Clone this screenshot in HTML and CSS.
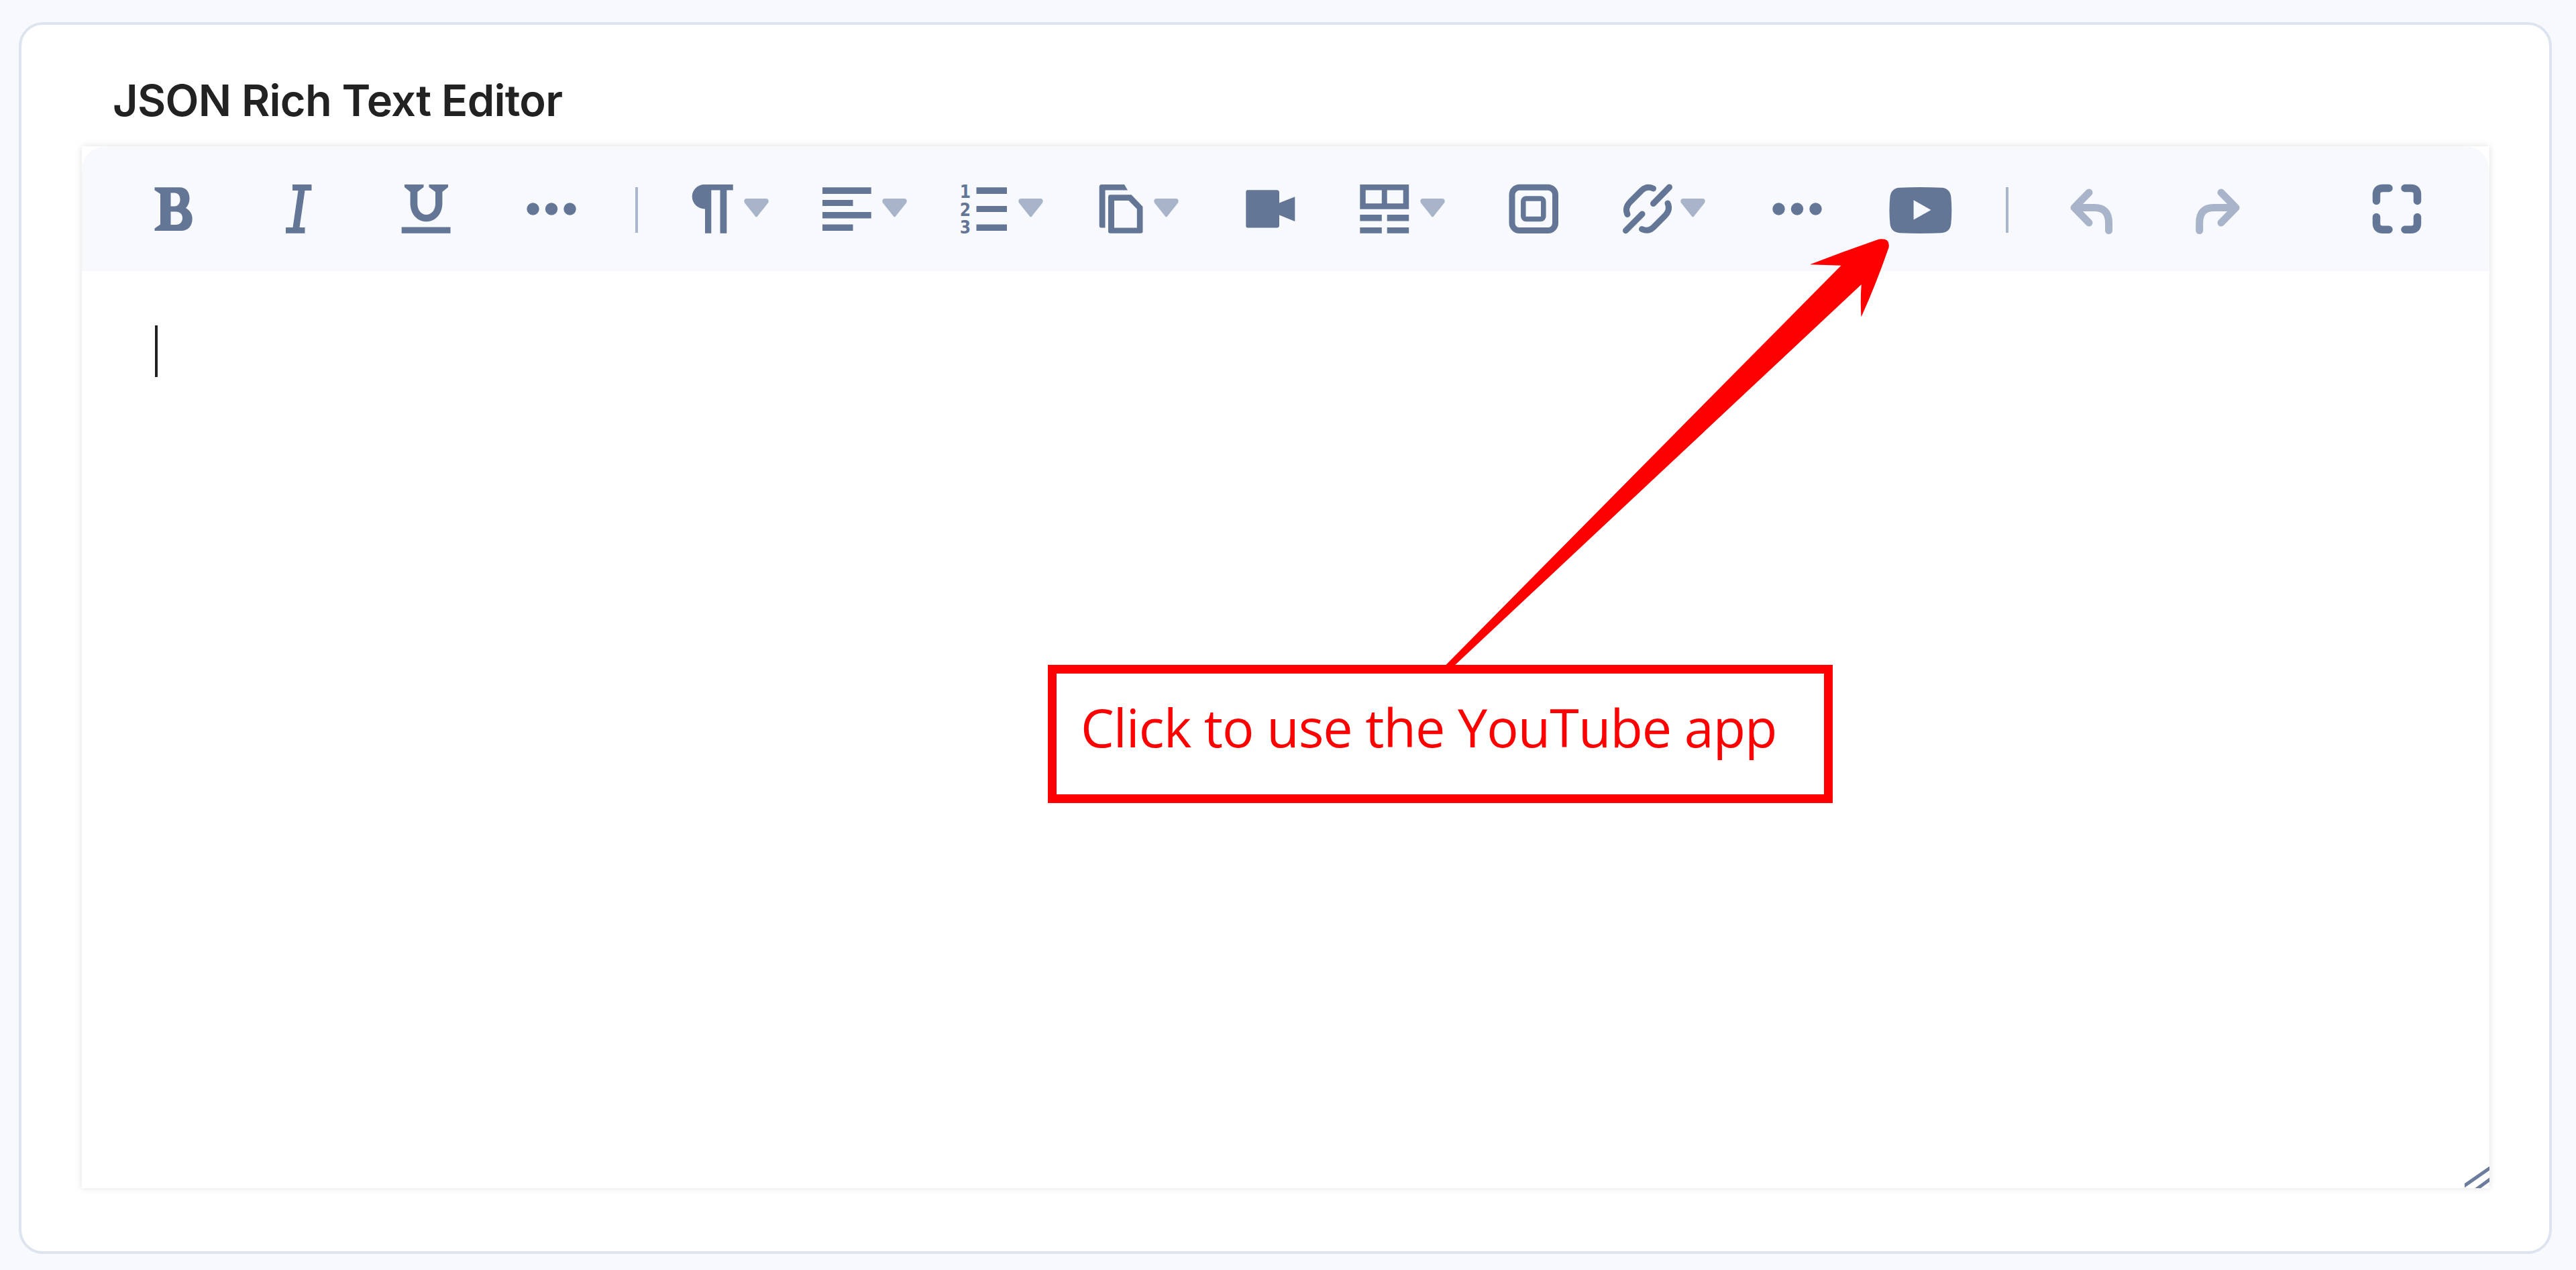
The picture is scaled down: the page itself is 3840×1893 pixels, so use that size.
FILE: index.html
```html
<!DOCTYPE html>
<html lang="en">
<head>
<meta charset="utf-8">
<title>JSON Rich Text Editor</title>
<link rel="stylesheet" href="styles.css">
</head>
<body>
<svg class="defs" aria-hidden="true">
  <symbol id="caret" viewBox="0 0 37 28"><path d="M4 0H33C36.500 0 38 4 35.500 7L20 26.500Q18.500 28.500 17 26.500L1.500 7C-1 4 .5 0 4 0Z"/></symbol>
  <symbol id="dots" viewBox="0 0 76 76"><circle cx="10.500" cy="38.500" r="9.200"/><circle cx="38" cy="38.500" r="9.200"/><circle cx="65.500" cy="38.500" r="9.200"/></symbol>
</svg>
<main class="card">
  <h1 class="title"><span>JSON Rich Text Editor</span></h1>
  <section class="editor">
    <div class="toolbar">
      <button class="tool bold" aria-label="Bold"><svg class="icon" width="58" viewBox="230 273 58 76"><path fill-rule="evenodd" d="M230.500 279.300H268C277 279.300 282.500 286 282.500 295.500C282.500 302 280 307 277 310C283 313.500 286.700 319 286.700 326C286.700 337 280 344 270 344H230.500V340.500L239 334.500V289L230.500 283.500ZM254.500 287.500V307.500H260C265.500 307.500 268.500 303 268.500 297.500C268.500 291 265 287.500 260 287.500ZM254.500 315.500V335H262C268 335 272 331 272 325C272 319 268 315.500 262 315.500Z"/></svg></button>
      <button class="tool italic" aria-label="Italic"><svg class="icon" width="40" viewBox="425 273 40 76"><path d="M436 275H464.500V284H454.500L446.500 339H454.500V347.700H426V339H436.500L444.500 284H436Z"/></svg></button>
      <button class="tool underline" aria-label="Underline"><svg class="icon" width="74" viewBox="598 273 74 76"><path d="M603 275H631.500V279L622.300 286V304C622.300 313 628 320 635.500 320S649 313 649 304V286L639.500 279V275H668V279L659.400 286V303C659.400 319 649 330.300 635.500 330.300S611.600 319 611.600 303V286L603 279ZM598.700 338.500H671.500V347.700H598.700Z"/></svg></button>
      <button class="tool more" aria-label="More"><svg class="icon" width="76"><use href="#dots"/></svg></button>
      <span class="divider divider-first"></span>
      <button class="tool paragraph" aria-label="Paragraph"><svg class="icon" width="62" viewBox="1031 273 62 76"><path d="M1050 275H1092.700V283.500H1083.300V347.700H1073.500V283.500H1060.300V347.700H1051V311.500C1040 311.500 1031.700 303 1031.700 293S1040 275 1050 275Z"/></svg><svg class="caret"><use href="#caret"/></svg></button>
      <button class="tool align" aria-label="Align"><svg class="icon" width="73" viewBox="1226 273 73 76"><path d="M1226 279.300H1298.700V289H1226ZM1226 298H1271.500V307H1226ZM1226 316H1298.700V325.500H1226ZM1226 334.500H1271.500V344H1226Z"/></svg><svg class="caret"><use href="#caret"/></svg></button>
      <button class="tool list" aria-label="Ordered list"><svg class="icon" width="71" viewBox="1431 273 71 76"><g class="digits"><text x="1430.800" y="294.500">1</text><text x="1430.800" y="321.500">2</text><text x="1430.800" y="347.700">3</text></g><path d="M1455.500 279.300H1501V289H1455.500ZM1455.500 307H1501V316H1455.500ZM1455.500 334.500H1501V344H1455.500Z"/></svg><svg class="caret"><use href="#caret"/></svg></button>
      <button class="tool copy" aria-label="Document"><svg class="icon" width="66" viewBox="1638 273 66 76"><path d="M1642 275H1676L1681 283.500H1647.500V339.500H1641.500Q1638.700 339.500 1638.700 336V278.500Q1638.700 275 1642 275Z"/><path fill-rule="evenodd" d="M1655 290.300H1686.500L1703.500 308V345Q1703.500 347.700 1700.500 347.700H1655Q1652 347.700 1652 345V293.500Q1652 290.300 1655 290.300ZM1661 299V339.500H1694.800V311.500L1682.500 299Z"/></svg><svg class="caret"><use href="#caret"/></svg></button>
      <button class="tool video" aria-label="Video"><svg class="icon" width="74" viewBox="1857 273 74 76"><path d="M1860 283.300H1903Q1907 283.300 1907 287V302.500L1930.300 293.300V330L1907 320.500V336Q1907 339.500 1903 339.500H1860Q1857.300 339.500 1857.300 336.500V286.500Q1857.300 283.300 1860 283.300Z"/></svg></button>
      <button class="tool table" aria-label="Table"><svg class="icon" width="74" viewBox="2027 273 74 76"><path fill-rule="evenodd" d="M2027.300 275H2100.200V311.700H2027.300ZM2035.700 283.500V303.300H2059.800V283.500ZM2067.700 283.500V303.300H2091.700V283.500ZM2027.300 320H2059.800V329.500H2027.300ZM2067.700 320H2100.200V329.500H2067.700ZM2027.300 339H2059.800V347.700H2027.300ZM2067.700 339H2100.200V347.700H2067.700Z"/></svg><svg class="caret"><use href="#caret"/></svg></button>
      <button class="tool embed" aria-label="Embed"><svg class="icon line" width="74" viewBox="2249 273 74 76"><rect x="2254" y="279.300" width="64.500" height="64.300" rx="11"/><rect class="inner" x="2270.800" y="296" width="30" height="30.500" rx="4"/></svg></button>
      <button class="tool link" aria-label="Link"><svg class="icon line" width="74" viewBox="2419 273 74 76"><path d="M2464.500 281Q2455 276.500 2447.500 283.500L2430 301Q2421.500 310 2426 319.500M2488.500 279L2464.500 303.500M2423.500 343.700L2448 319M2447.500 341.500Q2457 346 2464.500 339L2482 321.500Q2490.500 312.500 2486 303"/></svg><svg class="caret"><use href="#caret"/></svg></button>
      <button class="tool more-insert" aria-label="More"><svg class="icon" width="76"><use href="#dots"/></svg></button>
      <button class="tool youtube" aria-label="YouTube"><svg class="icon" width="94" viewBox="2816 273 94 76"><path fill-rule="evenodd" d="M2832 279.800Q2863 278.300 2894 279.800Q2906.500 280.500 2908.300 293Q2910.300 313.500 2908.300 334Q2906.500 346.500 2894 347.200Q2863 348.700 2832 347.200Q2819.300 346.500 2817.500 334Q2815.500 313.500 2817.500 293Q2819.300 280.500 2832 279.800ZM2852.600 298.300V327.500L2878.500 313Z"/></svg></button>
      <span class="divider divider-second"></span>
      <button class="tool undo faded" aria-label="Undo"><svg class="icon line" width="63" viewBox="3086 273 63 76"><path d="M3114 287L3092 309.500L3114 332M3094 309.500H3122Q3143.500 309.500 3143.500 332V343.500"/></svg></button>
      <button class="tool redo faded" aria-label="Redo"><svg class="icon line" width="66" viewBox="3273 273 66 76"><path d="M3311 287L3333 309.500L3311 332M3331 309.500H3300Q3278.700 309.500 3278.700 332V343.500"/></svg></button>
      <button class="tool fullscreen" aria-label="Full screen"><svg class="icon line" width="74" viewBox="3536 273 74 76"><path d="M3542.500 299.500V290Q3542.500 280.500 3552 280.500H3561M3585 280.500H3594Q3603.500 280.500 3603.500 290V299.500M3603.500 323.500V333Q3603.500 342.200 3594 342.200H3585M3561 342.200H3552Q3542.500 342.200 3542.500 333V323.500"/></svg></button>
    </div>
    <div class="content"><span class="cursor"></span></div>
    <svg class="resize" viewBox="0 0 37 32"><path d="M-2 29.500L39 1M17 34L39 18"/></svg>
  </section>
  <svg class="arrow" viewBox="2150 350 672 648"><path d="M2151.500 995L2744.500 395.700Q2721 395 2698 394.300Q2750 374 2801 356.500Q2818 354 2815.500 369Q2798 420 2774.500 472.500Q2773 448 2774.700 424L2165 995Z"/></svg>
  <div class="callout"><span>Click to use the YouTube app</span></div>
</main>
</body>
</html>
```
FILE: styles.css
```css
* { box-sizing: border-box; }
body {
  margin: 0;
  height: 1893px;
  padding: 33px 36px 25px 28px;
  background: #f7f9fd;
  font-family: Inter, "Liberation Sans", sans-serif;
  overflow: hidden;
}
.defs { position: absolute; width: 0; height: 0; }
.card {
  height: 1836px;
  padding: 0 89px 0 90px;
  background: #fff;
  border: 4px solid #dde4ef;
  border-radius: 36px;
}
.title {
  height: 181px;
  margin: 0;
  padding: 73px 0 0 46px;
  color: #222;
  font-size: 65px;
  font-weight: 600;
  line-height: 80px;
  letter-spacing: -0.750px;
  white-space: nowrap;
}
.editor {
  position: relative;
  height: 1553px;
  background: #fff;
  box-shadow: 0 0 10px rgba(0, 0, 0, .12);
}
.toolbar {
  display: flex;
  align-items: center;
  height: 186px;
  padding-left: 108px;
  background: #f7f9fd;
  border-radius: 36px 36px 0 0;
}
.tool {
  display: flex;
  flex: none;
  align-items: center;
  gap: 16px;
  padding: 0;
  border: 0;
  background: none;
  color: #647696;
}
.icon { display: block; flex: none; height: 76px; fill: currentColor; overflow: visible; }
.line {
  fill: none;
  stroke: currentColor;
  stroke-width: 9px;
  stroke-linecap: round;
  stroke-linejoin: round;
}
.line .inner { stroke-width: 7.500px; }
.caret { flex: none; width: 37px; height: 28px; margin-top: -3px; fill: #a7b4ca; }
.digits { font: bold 26px "DejaVu Sans Condensed", "DejaVu Sans", sans-serif; font-stretch: condensed; }
.faded { color: #a7b4ca; }
.faded .line { stroke-width: 11px; }
.divider { flex: none; width: 4px; height: 68px; margin-top: 4px; background: #a9b6cb; }
.italic { margin-left: 137px; }
.underline { margin-left: 133px; }
.more { margin-left: 112px; }
.divider-first { margin-left: 87px; }
.paragraph { margin-left: 80px; }
.align { margin-left: 80px; }
.list { margin-left: 79px; }
.copy { margin-left: 83px; }
.video { margin-left: 100px; }
.table { margin-left: 96px; }
.embed { margin-left: 95px; }
.link { margin-left: 96px; gap: 12px; }
.more-insert { margin-left: 99px; }
.youtube { margin-left: 99px; }
.divider-second { margin-left: 80px; }
.undo { margin-left: 92px; }
.redo { margin-left: 124px; }
.fullscreen { margin-left: 197px; }
.fullscreen .line { stroke-width: 11.500px; }
.content { padding: 81px 109px; }
.cursor { display: block; width: 4px; height: 77px; background: #222; }
.resize {
  position: absolute;
  right: 0;
  bottom: 0;
  width: 37px;
  height: 32px;
  fill: none;
  stroke: #6b7c9c;
  stroke-width: 5px;
}
.arrow { position: absolute; left: 2150px; top: 350px; width: 672px; height: 648px; fill: #f00; }
.callout {
  position: absolute;
  left: 1562px;
  top: 991px;
  width: 1170px;
  height: 206px;
  padding: 25px 0 0 36px;
  border: 13px solid #f00;
  background: #fff;
  color: #f00;
  font: 400 79px/110px "Open Sans", "Noto Sans", sans-serif;
  letter-spacing: -0.950px;
  white-space: nowrap;
}
```
